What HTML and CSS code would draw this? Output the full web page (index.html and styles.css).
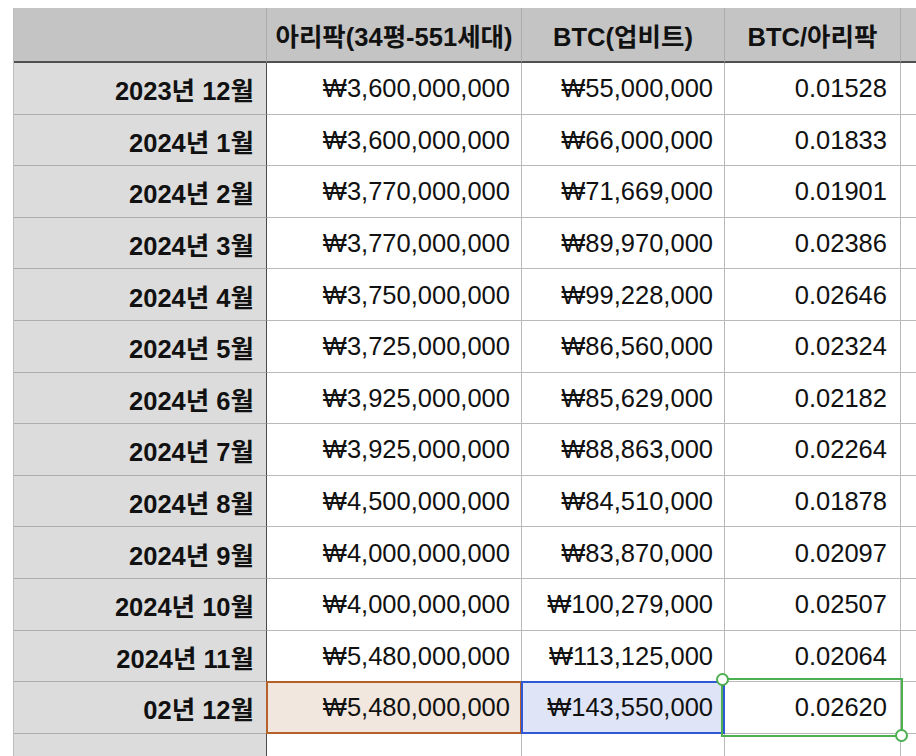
FILE: index.html
```html
<!DOCTYPE html>
<html lang="ko">
<head>
<meta charset="utf-8">
<link rel="stylesheet" href="styles.css">
</head>
<body>
<div class="sheet">
  <div class="grid">
    <div class="cell hdr corner"></div>
    <div class="cell hdr">아리팍(34평-551세대)</div>
    <div class="cell hdr">BTC(업비트)</div>
    <div class="cell hdr">BTC/아리팍</div>
    <div class="cell hdr extra"></div>

    <div class="cell rh">2023년 12월</div><div class="cell">₩3,600,000,000</div><div class="cell">₩55,000,000</div><div class="cell">0.01528</div><div class="cell extra"></div>
    <div class="cell rh">2024년 1월</div><div class="cell">₩3,600,000,000</div><div class="cell">₩66,000,000</div><div class="cell">0.01833</div><div class="cell extra"></div>
    <div class="cell rh">2024년 2월</div><div class="cell">₩3,770,000,000</div><div class="cell">₩71,669,000</div><div class="cell">0.01901</div><div class="cell extra"></div>
    <div class="cell rh">2024년 3월</div><div class="cell">₩3,770,000,000</div><div class="cell">₩89,970,000</div><div class="cell">0.02386</div><div class="cell extra"></div>
    <div class="cell rh">2024년 4월</div><div class="cell">₩3,750,000,000</div><div class="cell">₩99,228,000</div><div class="cell">0.02646</div><div class="cell extra"></div>
    <div class="cell rh">2024년 5월</div><div class="cell">₩3,725,000,000</div><div class="cell">₩86,560,000</div><div class="cell">0.02324</div><div class="cell extra"></div>
    <div class="cell rh">2024년 6월</div><div class="cell">₩3,925,000,000</div><div class="cell">₩85,629,000</div><div class="cell">0.02182</div><div class="cell extra"></div>
    <div class="cell rh">2024년 7월</div><div class="cell">₩3,925,000,000</div><div class="cell">₩88,863,000</div><div class="cell">0.02264</div><div class="cell extra"></div>
    <div class="cell rh">2024년 8월</div><div class="cell">₩4,500,000,000</div><div class="cell">₩84,510,000</div><div class="cell">0.01878</div><div class="cell extra"></div>
    <div class="cell rh">2024년 9월</div><div class="cell">₩4,000,000,000</div><div class="cell">₩83,870,000</div><div class="cell">0.02097</div><div class="cell extra"></div>
    <div class="cell rh">2024년 10월</div><div class="cell">₩4,000,000,000</div><div class="cell">₩100,279,000</div><div class="cell">0.02507</div><div class="cell extra"></div>
    <div class="cell rh">2024년 11월</div><div class="cell">₩5,480,000,000</div><div class="cell">₩113,125,000</div><div class="cell">0.02064</div><div class="cell extra"></div>
    <div class="cell rh">02년 12월</div><div class="cell ref-a">₩5,480,000,000</div><div class="cell ref-b">₩143,550,000</div><div class="cell active">0.02620<span class="sel"><span class="knob knob-tl"></span><span class="knob knob-br"></span></span></div><div class="cell extra"></div>

    <div class="cell rh last"></div><div class="cell last"></div><div class="cell last"></div><div class="cell last"></div><div class="cell extra last"></div>
  </div>
</div>
</body>
</html>
```
FILE: styles.css
```css
html, body {
  margin: 0;
  padding: 0;
  background: #ffffff;
  overflow: hidden;
  width: 916px;
  height: 756px;
}

.sheet {
  padding: 8px 0 0 13px;
}

.grid {
  display: grid;
  grid-template-columns: 253px 255px 203px 176px 15px;
  grid-template-rows: 55px repeat(13, 51.6px) 23px;
  border-left: 1px solid #bdbdbd;
  width: max-content;
  font-family: "Liberation Sans", "Noto Sans CJK KR", sans-serif;
  font-size: 25.5px;
  color: #111111;
}

.cell {
  box-sizing: border-box;
  border-right: 1px solid #b9b9b9;
  border-bottom: 1px solid #b9b9b9;
  display: flex;
  align-items: center;
  justify-content: flex-end;
  padding: 1px 11px 0 0;
  white-space: nowrap;
  position: relative;
  background: #ffffff;
}

.cell.last {
  border-bottom: none;
}

.hdr {
  background: #c4c4c4;
  border-right-color: #acacac;
  border-bottom: 2px solid #505050;
  justify-content: center;
  padding: 0;
  font-weight: bold;
}

.corner {
  border-right: 1px solid #acacac;
}

.rh {
  background: #dcdcdc;
  border-right: 1px solid #4a4a4a;
  border-bottom-color: #adadad;
  font-weight: bold;
  padding-right: 12px;
}

.extra {
  padding: 0;
  border-right: none;
}

.cell:nth-child(5n+4) {
  padding-right: 13px;
}

.hdr.cell:nth-child(4) {
  padding-right: 0;
}

.ref-a {
  background: #f2e7de;
}

.ref-a::after {
  content: "";
  position: absolute;
  left: -1px;
  top: -1px;
  right: -1px;
  bottom: -1px;
  border: 2px solid #b5612a;
}

.ref-b {
  background: #dfe4f6;
}

.ref-b::after {
  content: "";
  position: absolute;
  left: -1px;
  top: -1px;
  right: -1px;
  bottom: -1px;
  border: 2px solid #2f57d6;
}

.sel {
  position: absolute;
  left: -4px;
  top: -4px;
  right: -3px;
  bottom: -4px;
  border: 2px solid #4caf50;
  z-index: 2;
}

.knob {
  position: absolute;
  width: 9px;
  height: 9px;
  border-radius: 50%;
  background: #ffffff;
  border: 2px solid #4caf50;
}

.knob-tl {
  left: -7px;
  top: -7px;
}

.knob-br {
  right: -7px;
  bottom: -7px;
}
```
